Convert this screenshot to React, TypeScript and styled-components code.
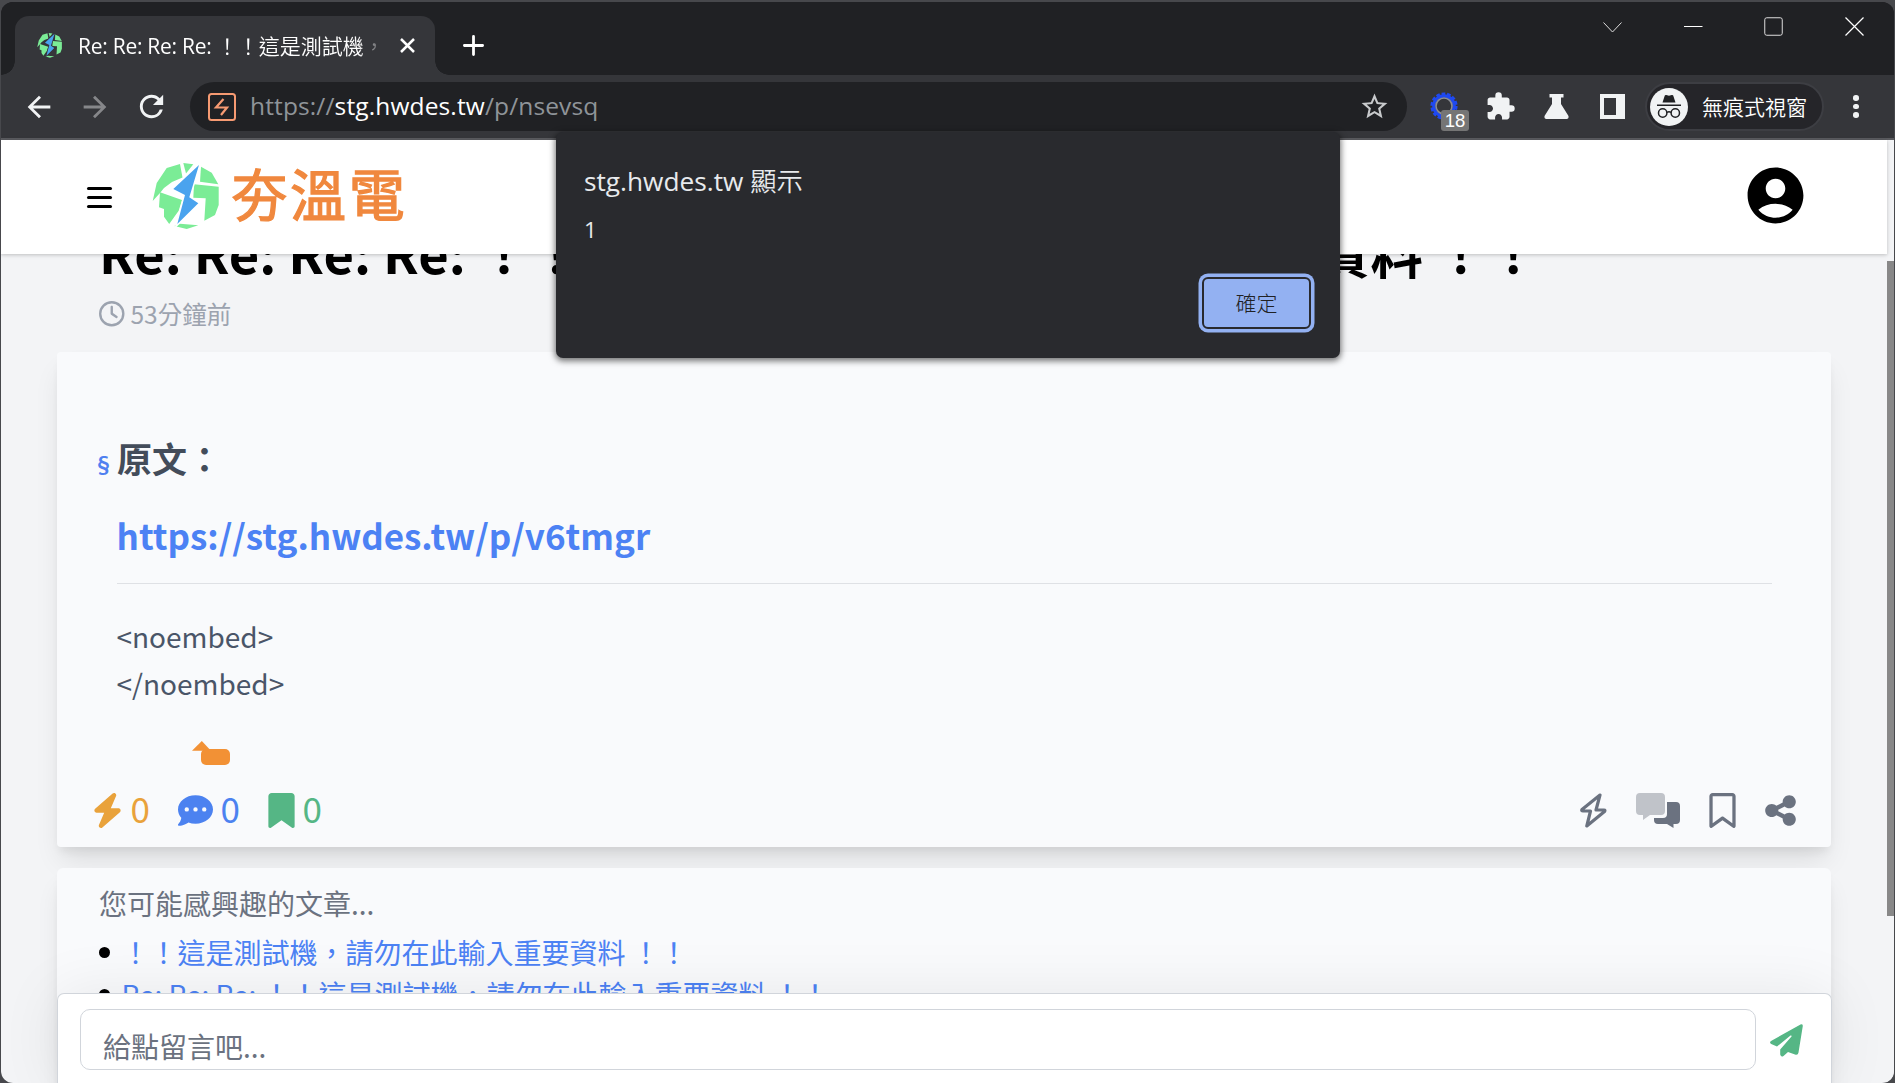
import React from 'react';
import styled, { createGlobalStyle } from 'styled-components';
import { FaBolt, FaBookmark, FaRegBookmark, FaCommentDots, FaShareNodes, FaRegClock } from 'react-icons/fa6';
import { MdArrowBack, MdArrowForward, MdRefresh, MdStarBorder, MdExtension, MdAccountCircle } from 'react-icons/md';

const ui = `"Open Sans", "Noto Sans CJK TC", sans-serif`;
const body = `"Noto Sans CJK TC", sans-serif`;

const Global = createGlobalStyle`
  * { box-sizing: border-box; }
  html, body { margin: 0; padding: 0; overflow: hidden; background: #4a4b4f; }
  svg { display: block; flex: none; }
`;

const Desktop = styled.div`
  width: 1895px; height: 1083px; padding: 2px 1px 0 1px; background: #47484c; overflow: hidden;
`;
const Win = styled.div`
  position: relative; height: 1081px; display: flex; flex-direction: column;
  border-radius: 12px; overflow: hidden; background: #202124; font-family: ${ui};
`;
const TabStrip = styled.div`
  height: 73px; display: flex; align-items: flex-start; background: #202124; flex: none; padding-left: 14px;
`;
const Tab = styled.div`
  position: relative; margin-top: 14px; width: 420px; height: 59px; background: #35363a;
  border-radius: 14px 14px 0 0; display: flex; align-items: center; padding: 0 20px 0 22px; color: #fff;
  &::before, &::after {
    content: ''; position: absolute; bottom: 0; width: 14px; height: 14px;
  }
  &::before { left: -14px; background: radial-gradient(circle at 0 0, transparent 13.5px, #35363a 14px); }
  &::after { right: -14px; background: radial-gradient(circle at 100% 0, transparent 13.5px, #35363a 14px); }
`;
const TabTitle = styled.div`
  flex: none; margin: 0 21px 0 16px; width: 301px; height: 34px; line-height: 34px; overflow: hidden; white-space: nowrap;
  font-size: 21px; letter-spacing: -0.26px; font-weight: 400;
  mask-image: linear-gradient(to right, #000 280px, transparent 306px);
`;
const TabCjk = styled.span` letter-spacing: 0; font-weight: 350; `;
const NewTab = styled.div` margin: 33px 0 0 28px; `;
const Controls = styled.div`
  margin-left: auto; display: flex; gap: 61.5px; padding: 15px 30.5px 0 0;
`;
const Toolbar = styled.div`
  height: 65px; flex: none; background: #35363a; border-bottom: 2px solid #5b5c60;
  display: flex; align-items: center; padding: 0 35px 0 21px; color: #f1f3f4;
`;
const Nav = styled.div<{ $dim?: boolean }>`
  width: 34px; height: 34px; margin-right: 22px; color: ${p => (p.$dim ? '#86878a' : '#f1f3f4')};
  display: flex; align-items: center; justify-content: center;
`;
const Omnibox = styled.div`
  width: 1217px; height: 49px; border-radius: 25px; background: #202124; flex: none;
  display: flex; align-items: center; padding: 0 17px 0 18px;
`;
const Url = styled.div`
  margin-left: 14px; flex: 1; font-size: 24.5px; line-height: 40px; color: #8f9499; letter-spacing: 0.13px; margin-top: -2px;
  b { font-weight: 400; color: #fff; }
`;
const Actions = styled.div` display: flex; align-items: center; margin-left: 23px; `;
const Gear = styled.div` position: relative; width: 29px; height: 30px; `;
const Badge = styled.div`
  position: absolute; left: 11px; top: 18px; width: 28px; height: 21px; border-radius: 3px;
  background: #757575; color: #fff; font: 18.5px/22px "Liberation Sans", sans-serif; text-align: center;
`;
const Slot = styled.div<{ $ml: number }>` margin-left: ${p => p.$ml}px; `;
const Profile = styled.div`
  margin-left: 20px; width: 179px; height: 49px; border-radius: 25px; border: 2px solid #3d3e43; background: #252529;
  display: flex; align-items: center; padding-left: 3px; font-size: 21px; font-weight: 350; color: #fff; flex: none;
  span { margin: -1px 0 0 14px; white-space: nowrap; }
`;
const Dots = styled.div`
  margin-left: auto; display: flex; flex-direction: column; gap: 3.2px; width: 6px;
  i { width: 5.6px; height: 5.6px; border-radius: 50%; background: #f1f3f4; }
`;

const Page = styled.div`
  flex: 1; min-height: 0; display: flex; background: #f3f4f6; font-family: ${body};
`;
const View = styled.div`
  width: 1886px; display: flex; flex-direction: column; position: relative;
`;
const ScrollTrack = styled.div` flex: 1; background: #f3f4f6; padding-top: 121px; `;
const ScrollThumb = styled.div` height: 655px; background: #888; `;
const Header = styled.header`
  position: relative; z-index: 2; height: 114px; flex: none; background: #fff;
  box-shadow: 0 1px 5px rgba(0,0,0,.13), 0 1px 3px rgba(0,0,0,.1); display: flex; align-items: center; padding: 0 83px 0 86px;
`;
const Menu = styled.div`
  display: flex; flex-direction: column; gap: 5.6px; margin-top: 1px;
  i { width: 25px; height: 3.5px; border-radius: 2px; background: #000; }
`;
const Brand = styled.div`
  display: flex; align-items: center; margin-left: 40px; margin-top: -2px;
  span {
    margin-left: 12.5px; font-size: 56px; line-height: 70px; font-weight: 400; letter-spacing: 2.6px; color: #f0883e;
    -webkit-text-stroke: 1.3px #f0883e; stroke-linejoin: round; margin-top: -9px;
  }
`;
const Avatar = styled.div` margin-left: auto; margin-top: -4px; margin-right: -5px; `;
const Scroller = styled.main`
  flex: 1; min-height: 0; overflow: hidden; padding: 0 56px; display: flex; flex-direction: column;
`;
const Title = styled.h1`
  margin: -41px 0 0 42px; height: 76px; line-height: 76px; font-size: 52.5px; font-weight: 700; white-space: nowrap; color: #000; flex: none;
`;
const Time = styled.div`
  margin: 7px 0 0 42px; height: 36px; display: flex; align-items: center; gap: 6px; color: #9ca3af; font-size: 24.5px;
  line-height: 36px; flex: none;
`;
const shadow = `0 17px 26px -5px rgba(0,0,0,.1), 0 7px 10px -3px rgba(0,0,0,.07)`;
const Card = styled.section`
  margin-top: 20px; height: 495px; flex: none; background: #f9fafc; border-radius: 4px; box-shadow: ${shadow};
  display: flex; flex-direction: column;
`;
const Article = styled.div` height: 418px; padding: 81px 59px 0 59.5px; color: #4a5568; `;
const Heading = styled.h3`
  margin: 0 0 0 -19.5px; height: 50px; line-height: 50px; font-size: 35px; font-weight: 700; color: #434c5a;
  display: flex; align-items: baseline;
  small { width: 20px; text-indent: -4px; font-size: 21px; color: #4f80f0; font-weight: 700; position: relative; top: -1px; }
`;
const BigLink = styled.div`
  margin-top: 22px; height: 60px; line-height: 60px; font-size: 35px; font-weight: 700; color: #4c82f4; white-space: nowrap;
`;
const Rule = styled.div` margin-top: 18px; height: 1px; background: #dfe1e5; `;
const Code = styled.p` margin: 29px 0 0; font-size: 28px; line-height: 47px; white-space: pre-line; `;
const Duck = styled.div` margin: 34px 0 0 75px; `;
const Bar = styled.div` flex: 1; display: flex; align-items: flex-start; padding: 23px 34px 0 37px; color: #6b7280; `;
const Count = styled.div<{ $c: string; $mr: number; $gap: number }>`
  display: flex; align-items: center; height: 35px; gap: ${p => p.$gap}px; margin-right: ${p => p.$mr}px; color: ${p => p.$c};
  font-size: 35px; line-height: 35px;
  span { margin-top: -6px; }
`;
const Tools = styled.div` margin-left: auto; display: flex; align-items: center; height: 35px; margin-right: -1px; `;
const Related = styled.section`
  margin-top: 21px; height: 300px; flex: none; background: #f9fafc; border-radius: 6px; box-shadow: ${shadow};
  padding: 14px 42px; font-size: 28px; color: #6b7280; line-height: 42px;
`;
const Item = styled.div<{ $first?: boolean }>`
  height: 42px; margin-top: ${p => (p.$first ? '7px' : '0')}; display: flex; align-items: center; color: #4c82f4; white-space: nowrap;
  &::before { content: ''; width: 11px; height: 11px; border-radius: 50%; background: #000; margin: 1px 11.5px 0 0; }
`;
const CommentBox = styled.div`
  position: absolute; left: 56px; bottom: 0; width: 1775px; height: 90px; background: #fff; border: 1px solid #d1d5db;
  border-bottom: 0; border-radius: 7px 7px 0 0; box-shadow: 0 0 60px rgba(0,0,0,.08);
  display: flex; padding: 15px 0 0 22px;
`;
const Field = styled.div`
  width: 1676px; height: 61px; border: 1px solid #d1d5db; border-radius: 10px; padding-left: 22px; font-size: 28px;
  line-height: 73px; color: #6b7280; margin-right: 13.5px;
`;
const Plane = styled.div` margin-top: 14.5px; `;

const Dialog = styled.div`
  position: absolute; z-index: 5; left: 555px; top: 130px; width: 784px; height: 226px; background: #292a2e;
  border-radius: 7px; box-shadow: 0 2px 6px 1px rgba(0,0,0,.55); padding: 26px 29px 0 28px; color: #e8eaed; display: flex; flex-direction: column;
`;
const DialogTitle = styled.div` font-size: 26.25px; line-height: 46px; letter-spacing: 0; white-space: nowrap; font-weight: 350;
  b { font-weight: 400; } `;
const DialogText = styled.div` margin-top: 6px; font-size: 22.5px; line-height: 40px; `;
const Ok = styled.button`
  margin: 27px 0 0 auto; width: 109px; height: 52px; border: 2px solid #292a2e; border-radius: 6px; background: #93b1f2;
  box-shadow: 0 0 0 3.5px #93b1f2; font: 300 21px/30px ${ui}; color: #202124; padding: 0;
`;

const Globe = ({ size, gap }: { size: number; gap: string }) => (
  <svg width={size} height={size} viewBox="0 0 67 67">
    <g fill="#7bec96">
      <path d="M28 1 30.500 14.500 20 19 12 25 8 30 .7 38 4.700 20 14.700 5Z" />
      <path d="M31.300 0 41.300 1.300 34 10.500Z" />
      <path d="M49 3.700 59.700 9.700 66.300 21.300 48 18.700Z" />
      <path d="M42 21.300 66.700 23.700V42L63 52 52.300 57.700 53.700 35.300 41.300 34.700Z" />
      <path d="M8 29.300 30 37 26.700 47.700 17.200 61 12 53.700V46L7 44.300Z" />
      <path d="M22.300 63 28 60.700 46.300 62.300 34.700 66Z" />
    </g>
    <path d="M47 2 21.300 26 33 32 25.300 61 46.300 40.300 37.300 34.300Z" fill="#4aa3ee" stroke={gap} strokeWidth="3" paintOrder="stroke" />
  </svg>
);

const BoltOutline = () => (
  <svg width="27" height="35" viewBox="0 0 27 35" fill="none" stroke="#6b7280" strokeWidth="3.2" strokeLinejoin="round">
    <path d="M20 2 2 16.5Q1.2 18 3 18H10.5L6.8 33 24.5 18.5Q25.5 17 24 17H16Z" />
  </svg>
);

const App: React.FC = () => (
  <>
    <Global />
    <Desktop>
      <Win>
        <TabStrip>
          <Tab>
            <Globe size={25} gap="#35363a" />
            <TabTitle>Re: Re: Re: Re: <TabCjk>！！這是測試機，請勿</TabCjk></TabTitle>
            <svg width="15" height="15" viewBox="0 0 15 15" stroke="#fff" strokeWidth="2.500">
              <path d="M1 1 14 14M14 1 1 14" />
            </svg>
          </Tab>
          <NewTab>
            <svg width="21" height="21" viewBox="0 0 21 21" stroke="#fff" strokeWidth="2.8" strokeLinecap="round"><path d="M10.5 1.4V19.6M1.4 10.5H19.6" /></svg>
          </NewTab>
          <Controls>
            <svg width="19" height="19" viewBox="0 0 19 19" stroke="#ddd" fill="none"><path d="M.5 5.500 9.5 15 18.500 5.500" /></svg>
            <svg width="19" height="19" viewBox="0 0 19 19" stroke="#fff"><path d="M0 9.500H18.500" /></svg>
            <svg width="19" height="19" viewBox="0 0 19 19" stroke="#ddd" fill="none"><rect x=".75" y=".75" width="17.500" height="17.500" rx="2" /></svg>
            <svg width="19" height="19" viewBox="0 0 19 19" stroke="#fff" strokeWidth="1.200"><path d="M.5.5 18.500 18.500M18.500.5.5 18.500" /></svg>
          </Controls>
        </TabStrip>
        <Toolbar>
          <Nav><MdArrowBack size={34} /></Nav>
          <Nav $dim><MdArrowForward size={34} /></Nav>
          <Nav><MdRefresh size={35} /></Nav>
          <Omnibox>
            <svg width="28" height="28" viewBox="0 0 28 28" fill="none" stroke="#f69a72" strokeWidth="2">
              <rect x="1" y="1" width="26" height="26" rx="2.500" />
              <path d="M15.500 6 8 14.500H19L13 22" strokeWidth="2.200" />
            </svg>
            <Url>https://<b>stg.hwdes.tw</b>/p/nsevsq</Url>
            <MdStarBorder size={31} color="#c8cacc" />
          </Omnibox>
          <Actions>
            <Gear>
              <svg width="28" height="28" viewBox="0 0 28 28" fill="none">
                <circle cx="14" cy="14" r="12" stroke="#1f49f0" strokeWidth="3.200" strokeDasharray="3.600 1.785" />
                <circle cx="14" cy="14" r="10.200" stroke="#1f49f0" strokeWidth="3.200" />
                <circle cx="14" cy="14" r="8" stroke="#8b8e94" strokeWidth="1.600" />
              </svg>
              <Badge>18</Badge>
            </Gear>
            <Slot $ml={26}><MdExtension size={31} /></Slot>
            <Slot $ml={28}>
              <svg width="25" height="25" viewBox="0 0 25 25" fill="#f1f3f4"><path d="M5.500 0H19.500V3.500H17V10L24.500 22Q25 25 22.500 25H2.500Q0 25 .5 22L8 10V3.500H5.500Z" /></svg>
            </Slot>
            <Slot $ml={31}>
              <svg width="25" height="25" viewBox="0 0 25 25" fill="#f1f3f4"><path fillRule="evenodd" d="M0 0H25V25H0ZM4 4V21H16V4Z" /></svg>
            </Slot>
          </Actions>
          <Profile>
            <svg width="38" height="38" viewBox="0 0 38 38">
              <circle cx="19" cy="19" r="19" fill="#f1f3f4" />
              <path d="M12.500 14.500 14.800 7.600Q15.200 6.800 16.200 7.100L19 7.800 21.800 7.100Q22.800 6.800 23.200 7.600L25.500 14.500Z" fill="#202124" />
              <path d="M7 17.200H31" stroke="#202124" strokeWidth="1.600" />
              <g fill="none" stroke="#202124" strokeWidth="1.500"><circle cx="12.700" cy="25" r="4.200" /><circle cx="25.300" cy="25" r="4.200" /><path d="M17 24.500Q19 23 21 24.500" /></g>
            </svg>
            <span>無痕式視窗</span>
          </Profile>
          <Dots><i /><i /><i /></Dots>
        </Toolbar>
        <Page>
          <View>
            <Header>
              <Menu><i /><i /><i /></Menu>
              <Brand><Globe size={67} gap="#fff" /><span>夯溫電</span></Brand>
              <Avatar><MdAccountCircle size={67} color="#000" /></Avatar>
            </Header>
            <Scroller>
              <Title>Re: Re: Re: Re: ！！這是測試機，請勿在此輸入重要資料 ！！</Title>
              <Time><FaRegClock size={25.500} />53分鐘前</Time>
              <Card>
                <Article>
                  <Heading><small>§</small>原文：</Heading>
                  <BigLink>https://stg.hwdes.tw/p/v6tmgr</BigLink>
                  <Rule />
                  <Code>{'<noembed>\n</noembed>'}</Code>
                  <Duck>
                    <svg width="38" height="24" viewBox="0 0 38 24" fill="#f29135"><path d="M0 9.800 9.800 0 19 9.800Z" /><rect x="9" y="8" width="29" height="16" rx="5" /></svg>
                  </Duck>
                </Article>
                <Bar>
                  <Count $c="#e9a23b" $mr={28.5} $gap={10.5}><FaBolt size={35} style={{ margin: '0 -5px 0 -4px' }} /><span>0</span></Count>
                  <Count $c="#4c82f0" $mr={28} $gap={7}><FaCommentDots size={35} /><span>0</span></Count>
                  <Count $c="#55b685" $mr={0} $gap={7.5}><FaBookmark size={35} style={{ margin: '0 -4px' }} /><span>0</span></Count>
                  <Tools>
                    <BoltOutline />
                    <Slot $ml={29}>
                      <svg width="44" height="35" viewBox="0 0 44 35">
                        <path d="M4 0H25Q29 0 29 4V18Q29 22 25 22H14L7 27V22H4Q0 22 0 18V4Q0 0 4 0Z" fill="#c0c3c9" />
                        <path d="M31 9H40Q44 9 44 13V27Q44 31 40 31H37.500V35L31 31H22Q18 31 18 27V25H27Q31 25 31 21Z" fill="#6b7280" />
                      </svg>
                    </Slot>
                    <Slot $ml={25}><FaRegBookmark size={35} /></Slot>
                    <Slot $ml={23}><FaShareNodes size={35} /></Slot>
                  </Tools>
                </Bar>
              </Card>
              <Related>
                您可能感興趣的文章...
                <Item $first>！！這是測試機，請勿在此輸入重要資料 ！！</Item>
                <Item>Re: Re: Re: ！！這是測試機，請勿在此輸入重要資料 ！！</Item>
              </Related>
            </Scroller>
            <CommentBox>
              <Field>給點留言吧...</Field>
              <Plane>
                <svg width="33" height="33" viewBox="0 0 33 33" fill="#55b685">
                  <path d="M32.800 2 28.500 28.500Q28 31.500 25 30.500L18 28 13.500 32Q11 33.500 10.200 30.500V25.500L21.500 12.500Q22 11 20.500 11.500L7 22.500 1.200 20Q-1 18.500 1 17L30.500.4Q33 0 32.800 2Z" />
                </svg>
              </Plane>
            </CommentBox>
          </View>
          <ScrollTrack><ScrollThumb /></ScrollTrack>
        </Page>
        <Dialog role="alertdialog">
          <DialogTitle><b>stg.hwdes.tw</b> 顯示</DialogTitle>
          <DialogText>1</DialogText>
          <Ok>確定</Ok>
        </Dialog>
      </Win>
    </Desktop>
  </>
);

export default App;
